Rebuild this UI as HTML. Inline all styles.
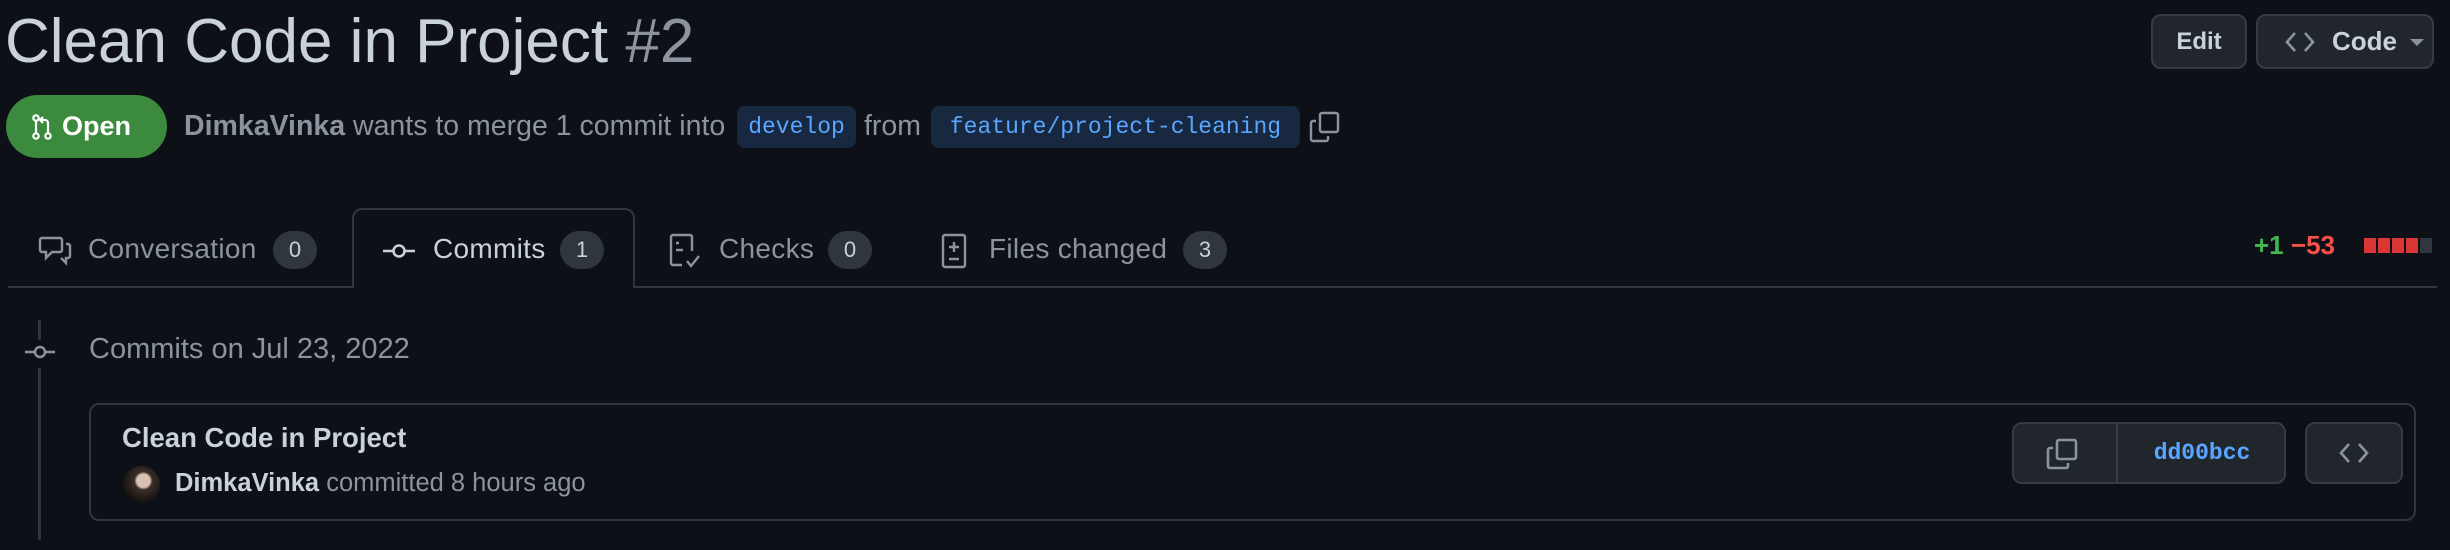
<!DOCTYPE html>
<html><head><meta charset="utf-8"><style>
*{margin:0;padding:0;box-sizing:border-box}
body{width:2450px;height:550px;background:#0d1117;color:#c9d1d9;font-family:"Liberation Sans",sans-serif;position:relative;overflow:hidden}
.a{position:absolute;white-space:nowrap}
.mono{font-family:"Liberation Mono",monospace}
.btn{position:absolute;background:#21262d;border:2px solid #363b42;border-radius:10px;display:flex;align-items:center;justify-content:center;font-weight:bold;font-size:24px;color:#c9d1d9}
.cnt{position:absolute;background:#30363d;border-radius:20px;height:38px;width:44px;top:231px;font-size:22px;color:#c9d1d9;display:flex;align-items:center;justify-content:center}
.tab{position:absolute;top:231px;font-size:28px;letter-spacing:0.3px;color:#8b949e;line-height:36px}
svg{position:absolute}
</style></head><body>
<div class="a" style="left:5px;top:6px;font-size:62px;line-height:72px;color:#c9d1d9">Clean Code in Project <span style="color:#8b949e">#2</span></div>

<div class="btn" style="left:2151px;top:14px;width:96px;height:55px">Edit</div>
<div class="btn" style="left:2256px;top:14px;width:178px;height:55px;justify-content:flex-start;padding-left:26px">
<svg style="position:static" width="32" height="24" viewBox="0 0 32 24"><path d="M11 3 3 12l8 9M21 3l8 9-8 9" stroke="#8b949e" stroke-width="2.6" fill="none"/></svg>
<span style="margin-left:16px;font-size:26px">Code</span>
<svg style="position:static;margin-left:12px" width="16" height="10" viewBox="0 0 16 10"><path d="M1 2h14L8 9z" fill="#8b949e"/></svg></div>

<div class="a" style="left:6px;top:95px;width:161px;height:63px;background:#3b8a3e;border-radius:32px;color:#fff;font-weight:bold;font-size:27px;display:flex;align-items:center;padding-left:26px">
<svg style="position:static" width="20" height="26" viewBox="0 0 20 26"><circle cx="4" cy="4" r="2.7" stroke="#fff" stroke-width="2.2" fill="none"/><circle cx="4" cy="22" r="2.7" stroke="#fff" stroke-width="2.2" fill="none"/><circle cx="16" cy="22" r="2.7" stroke="#fff" stroke-width="2.2" fill="none"/><path d="M4 7v12M16 19V9a3 3 0 0 0-3-3H9M11 3 8 6l3 3" stroke="#fff" stroke-width="2.2" fill="none"/></svg>
<span style="margin-left:10px">Open</span></div>

<div class="a" style="left:184px;top:108px;font-size:28.5px;line-height:36px;color:#8b949e"><b style="color:#8b949e">DimkaVinka</b> wants to merge 1 commit into</div>
<div class="a mono" style="left:737px;top:106px;width:119px;height:42px;background:#172840;border-radius:8px;color:#58a6ff;font-size:23px;line-height:42px;text-align:center">develop</div>
<div class="a" style="left:864px;top:108px;font-size:28.5px;line-height:36px;color:#8b949e">from</div>
<div class="a mono" style="left:931px;top:106px;width:369px;height:42px;background:#172840;border-radius:8px;color:#58a6ff;font-size:23px;line-height:42px;text-align:center">feature/project-cleaning</div>
<svg style="left:1308px;top:110px" width="34" height="34" viewBox="0 0 34 34"><rect x="12" y="3" width="18" height="19" rx="2" stroke="#8b949e" stroke-width="2.4" fill="none"/><path d="M8 11H5a2 2 0 0 0-2 2v16a2 2 0 0 0 2 2h13a2 2 0 0 0 2-2v-3" stroke="#8b949e" stroke-width="2.4" fill="none"/></svg>

<!-- tabs -->
<div class="a" style="left:8px;top:286px;width:2429px;height:2px;background:#30363d"></div>
<div class="a" style="left:352px;top:208px;width:283px;height:80px;border:2px solid #30363d;border-bottom:none;border-radius:10px 10px 0 0;background:#0d1117"></div>
<svg style="left:38px;top:234px" width="34" height="34" viewBox="0 0 34 34"><path d="M4 4h18a2 2 0 0 1 2 2v10a2 2 0 0 1-2 2h-8l-6 6v-6H4a2 2 0 0 1-2-2V6a2 2 0 0 1 2-2zM28 10h2a2 2 0 0 1 2 2v10a2 2 0 0 1-2 2h-2v5l-5-5" stroke="#8b949e" stroke-width="2.4" fill="none"/></svg>
<div class="tab" style="left:88px">Conversation</div><div class="cnt" style="left:273px">0</div>
<svg style="left:382px;top:236px" width="34" height="30" viewBox="0 0 34 30"><circle cx="17" cy="15" r="5.5" stroke="#c9d1d9" stroke-width="2.6" fill="none"/><path d="M1 15h10M23 15h10" stroke="#c9d1d9" stroke-width="2.6"/></svg>
<div class="tab" style="left:433px;color:#c9d1d9">Commits</div><div class="cnt" style="left:560px">1</div>
<svg style="left:668px;top:232px" width="34" height="38" viewBox="0 0 34 38"><path d="M14 33H5a2 2 0 0 1-2-2V5a2 2 0 0 1 2-2h17a2 2 0 0 1 2 2v14M8 11h3M8 18h7M19 29l4 5 8-10" stroke="#8b949e" stroke-width="2.4" fill="none"/></svg>
<div class="tab" style="left:719px">Checks</div><div class="cnt" style="left:828px">0</div>
<svg style="left:940px;top:232px" width="30" height="38" viewBox="0 0 30 38"><rect x="3" y="3" width="22" height="32" rx="2" stroke="#8b949e" stroke-width="2.4" fill="none"/><path d="M14 10v10M9 15h10M9 27h10" stroke="#8b949e" stroke-width="2.4"/></svg>
<div class="tab" style="left:989px">Files changed</div><div class="cnt" style="left:1183px">3</div>

<div class="a" style="left:2254px;top:230px;font-size:26px;font-weight:bold;line-height:30px"><span style="color:#3fb950">+1</span> <span style="color:#f85149">−53</span></div>
<div class="a" style="left:2364px;top:238px;display:flex;gap:2px"><i style="width:12px;height:15px;background:#da3633;display:block"></i><i style="width:12px;height:15px;background:#da3633;display:block"></i><i style="width:12px;height:15px;background:#da3633;display:block"></i><i style="width:12px;height:15px;background:#da3633;display:block"></i><i style="width:12px;height:15px;background:#30363d;display:block"></i></div>

<!-- timeline -->
<div class="a" style="left:38px;top:320px;width:3px;height:20px;background:#30363d"></div>
<div class="a" style="left:38px;top:368px;width:3px;height:172px;background:#30363d"></div>
<svg style="left:24px;top:340px" width="32" height="24" viewBox="0 0 32 24"><circle cx="16" cy="12" r="5" stroke="#8b949e" stroke-width="2.4" fill="none"/><path d="M1 12h10M21 12h10" stroke="#8b949e" stroke-width="2.4"/></svg>
<div class="a" style="left:89px;top:331px;font-size:29px;line-height:36px;color:#8b949e">Commits on Jul 23, 2022</div>

<div class="a" style="left:89px;top:403px;width:2327px;height:118px;border:2px solid #30363d;border-radius:10px"></div>
<div class="a" style="left:122px;top:421px;font-size:27.5px;font-weight:bold;line-height:34px;color:#c9d1d9">Clean Code in Project</div>
<div class="a" style="left:123px;top:466px;width:37px;height:37px;border-radius:50%;background:radial-gradient(circle at 55% 40%,#d9c2b2 0 22%,#3a2e28 30%,#151210 70%)"></div>
<div class="a" style="left:175px;top:466px;font-size:25.5px;line-height:34px;color:#8b949e"><b style="color:#c9d1d9">DimkaVinka</b> committed 8 hours ago</div>

<div class="a" style="left:2012px;top:422px;width:274px;height:62px;background:#21262d;border:2px solid #363b42;border-radius:10px"></div>
<div class="a" style="left:2116px;top:424px;width:2px;height:58px;background:#363b42"></div>
<svg style="left:2045px;top:437px" width="34" height="34" viewBox="0 0 34 34"><rect x="12" y="3" width="19" height="19" rx="2" stroke="#8b949e" stroke-width="2.6" fill="none"/><path d="M8 11H5a2 2 0 0 0-2 2v16a2 2 0 0 0 2 2h16a2 2 0 0 0 2-2v-3" stroke="#8b949e" stroke-width="2.6" fill="none"/></svg>
<div class="a mono" style="left:2118px;top:437px;width:168px;text-align:center;font-size:23px;font-weight:bold;line-height:32px;color:#58a6ff">dd00bcc</div>
<div class="btn" style="left:2305px;top:422px;width:98px;height:62px"><svg style="position:static" width="32" height="24" viewBox="0 0 32 24"><path d="M11 3 3 12l8 9M21 3l8 9-8 9" stroke="#8b949e" stroke-width="2.6" fill="none"/></svg></div>
</body></html>
